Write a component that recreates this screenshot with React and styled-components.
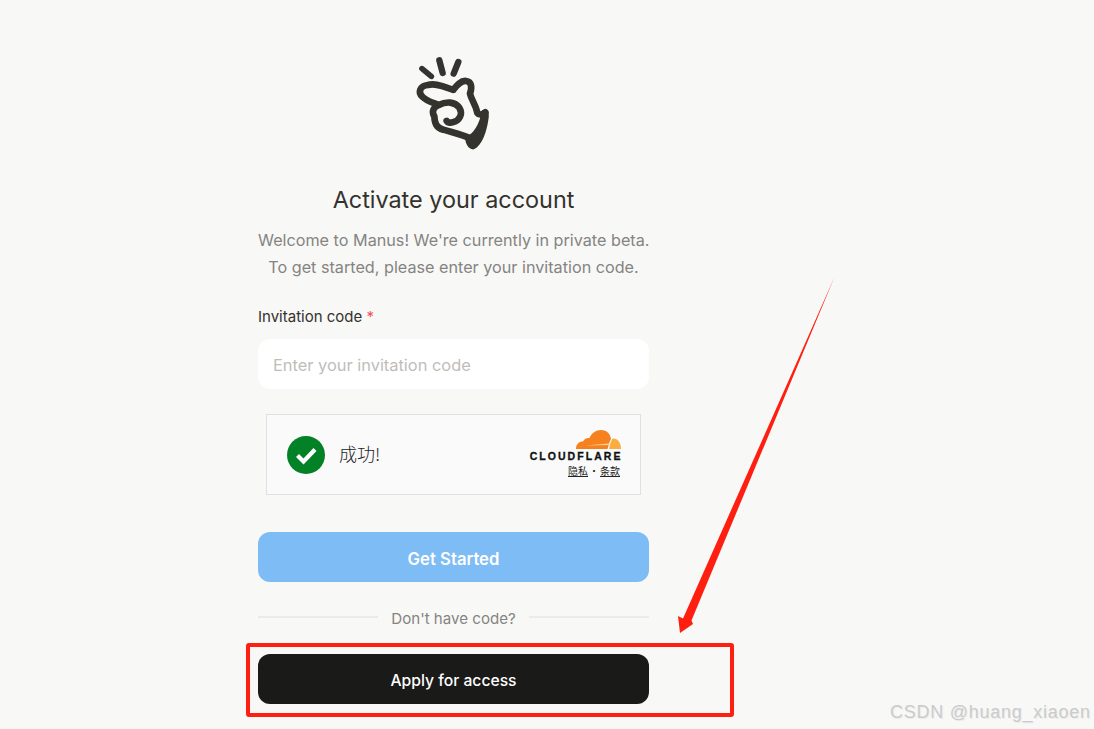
import React from "react";
import styled, { createGlobalStyle } from "styled-components";

const GlobalStyle = createGlobalStyle`
  html, body {
    margin: 0;
    padding: 0;
    height: 100%;
    overflow: hidden;
    background: #f8f8f7;
  }
`;

const Page = styled.div`
  position: relative;
  width: 1094px;
  height: 729px;
  padding: 56px 0 0 258px;
  box-sizing: border-box;
  font-family: Inter, "Noto Sans", sans-serif;
  overflow: hidden;
`;

const Column = styled.main`
  width: 391px;
  display: flex;
  flex-direction: column;
`;

const LogoWrap = styled.div`
  display: flex;
  justify-content: center;
  height: 94px;
`;

const Title = styled.h1`
  margin: 32px 0 0;
  font-size: 23.4px;
  line-height: 36px;
  font-weight: 400;
  text-align: center;
  color: #34322d;
`;

const Subtitle = styled.p`
  margin: 9px 0 0;
  font-size: 16.2px;
  line-height: 27px;
  font-weight: 400;
  text-align: center;
  color: #858481;
  white-space: nowrap;
`;

const Label = styled.label`
  margin-top: 25px;
  font-size: 15px;
  line-height: 22px;
  color: #34322d;
`;

const Star = styled.span`
  color: #ef4f5c;
`;

const Input = styled.input`
  margin-top: 11px;
  height: 50px;
  box-sizing: border-box;
  padding: 2px 15px 0;
  border: none;
  border-radius: 12px;
  background: #fff;
  font-family: inherit;
  font-size: 16.4px;
  outline: none;
  &::placeholder {
    color: #bfbdba;
    opacity: 1;
  }
`;

const Widget = styled.div`
  margin: 25px 8px 0;
  height: 81px;
  box-sizing: border-box;
  display: flex;
  align-items: center;
  padding: 0 19px 0 20px;
  background: #fafafa;
  border: 1px solid #e0e0e0;
`;

const WidgetText = styled.span`
  margin: 0 0 3px 14px;
  flex: 1;
  font-family: "Noto Sans CJK SC", sans-serif;
  font-size: 18px;
  font-weight: 300;
  color: #232323;
`;

const Brand = styled.div`
  align-self: flex-start;
  display: flex;
  flex-direction: column;
  align-items: flex-end;
  margin-top: 15px;
`;

const BrandName = styled.span`
  margin-top: 2px;
  margin-right: -1.5px;
  font-family: "Liberation Sans", sans-serif;
  font-size: 10.5px;
  line-height: 11px;
  font-weight: 700;
  letter-spacing: 2.05px;
  color: #111;
  -webkit-text-stroke: 0.3px #111;
`;

const BrandLinks = styled.div`
  display: flex;
  align-items: center;
  gap: 1px;
  margin: 3px 1px 0 0;
  font-family: "Noto Sans CJK SC", sans-serif;
  font-size: 10px;
  line-height: 12px;
  color: #232323;
`;

const BrandLink = styled.a`
  color: inherit;
  text-decoration: underline;
`;

const Button = styled.button`
  height: 50px;
  padding: 3px 0 0;
  border: none;
  border-radius: 12px;
  font-family: inherit;
  background: ${props => (props.$dark ? "#1a1a19" : "#7dbcf5")};
  color: #fff;
  font-size: ${props => (props.$dark ? "15.7px" : "16.7px")};
  font-weight: ${props => (props.$dark ? 500 : 600)};
  margin-top: ${props => (props.$dark ? "23px" : "37px")};
`;

const Divider = styled.div`
  margin-top: 25px;
  display: flex;
  align-items: center;
  gap: 13px;
  font-size: 15.1px;
  line-height: 24px;
  color: #858481;
  &::before,
  &::after {
    content: "";
    flex: 1;
    height: 2px;
    margin-top: -4px;
    background: #ebebe9;
  }
`;

const Callout = styled.div`
  position: absolute;
  left: 246px;
  top: 643px;
  width: 488px;
  height: 74px;
  box-sizing: border-box;
  border: 4px solid #fe1f11;
  border-radius: 3px;
`;

const ArrowSvg = styled.svg`
  position: absolute;
  left: 670px;
  top: 270px;
`;

const Watermark = styled.div`
  position: absolute;
  left: 890px;
  top: 700px;
  font-family: "Liberation Sans", sans-serif;
  font-size: 18px;
  line-height: 24px;
  letter-spacing: 0.75px;
  white-space: nowrap;
  color: #cbcbcb;
  text-shadow: 1px 1px 0 #ececec;
`;

const ManusLogo = () => (
  <svg width="110" height="94" viewBox="-3 33 330 282" fill="none" aria-hidden="true">
    <g stroke="#34332e" strokeWidth="20" strokeLinecap="round" strokeLinejoin="round">
      <path d="M66 71 L94 94" strokeWidth="17" />
      <path d="M118 46 L128 84" strokeWidth="19" />
      <path d="M175 51 L161 86" strokeWidth="19" />
      <path d="M160 134 C135 128 108 112 84 120 C60 122 52 142 68 156 C80 168 96 172 116 180 C100 186 94 200 103 214 C104 234 108 248 130 254 C155 262 185 268 210 280" />
      <path d="M160 134 C170 122 182 106 198 108 C216 110 216 128 210 146 C214 165 228 180 232 204 C238 212 248 208 256 202" />
      <path d="M116 180 C140 168 165 170 178 188 C190 207 178 228 158 232 C150 234 142 232 140 228" />
    </g>
    <path d="M246 196 C262 188 270 200 265 225 C260 260 246 302 222 313 C206 316 194 294 196 276 C220 268 238 240 246 196 Z" fill="#34332e" />
  </svg>
);

const CheckBadge = () => (
  <svg width="38" height="38" viewBox="0 0 38 38" aria-hidden="true">
    <circle cx="19" cy="19" r="19" fill="#038127" />
    <path d="M10.5 19.5 L16.5 25.5 L28 13.5" fill="none" stroke="#fff" strokeWidth="4.2" />
  </svg>
);

const CloudflareCloud = () => (
  <svg width="45" height="19" viewBox="0 0 45 19" aria-hidden="true">
    <path d="M0 19 C0 14 3 11.5 7 11.5 C8.5 8.5 11 7.5 13.5 8 C15.5 3 20 0 25 0 C31 0 34.5 4 35 9 C33 12 33 15 31.5 19 Z" fill="#f6821f" />
    <path d="M33 19 C34 14 35 11 36.5 8.5 C41 8 45 12 45 19 Z" fill="#fbad41" />
    <path d="M9 15.5 L33 13.5 L33.5 15 Z" fill="#fcd2a2" />
  </svg>
);

export default function App() {
  return (
    <Page>
      <GlobalStyle />
      <Column>
        <LogoWrap>
          <ManusLogo />
        </LogoWrap>
        <Title>Activate your account</Title>
        <Subtitle>
          Welcome to Manus! We're currently in private beta.
          <br />
          To get started, please enter your invitation code.
        </Subtitle>
        <Label htmlFor="code">
          Invitation code <Star>*</Star>
        </Label>
        <Input id="code" placeholder="Enter your invitation code" />
        <Widget>
          <CheckBadge />
          <WidgetText>成功!</WidgetText>
          <Brand>
            <CloudflareCloud />
            <BrandName>CLOUDFLARE</BrandName>
            <BrandLinks>
              <BrandLink>隐私</BrandLink>
              <span>•</span>
              <BrandLink>条款</BrandLink>
            </BrandLinks>
          </Brand>
        </Widget>
        <Button>Get Started</Button>
        <Divider>Don't have code?</Divider>
        <Button $dark>Apply for access</Button>
      </Column>
      <Callout />
      <ArrowSvg width="170" height="370" viewBox="0 0 170 370" aria-hidden="true">
        <path d="M164.5 7 L21.5 350.5 L23 354 L10 363 L8 346 L13 348.5 Z" fill="#fe1f11" />
      </ArrowSvg>
      <Watermark>CSDN @huang_xiaoen</Watermark>
    </Page>
  );
}
